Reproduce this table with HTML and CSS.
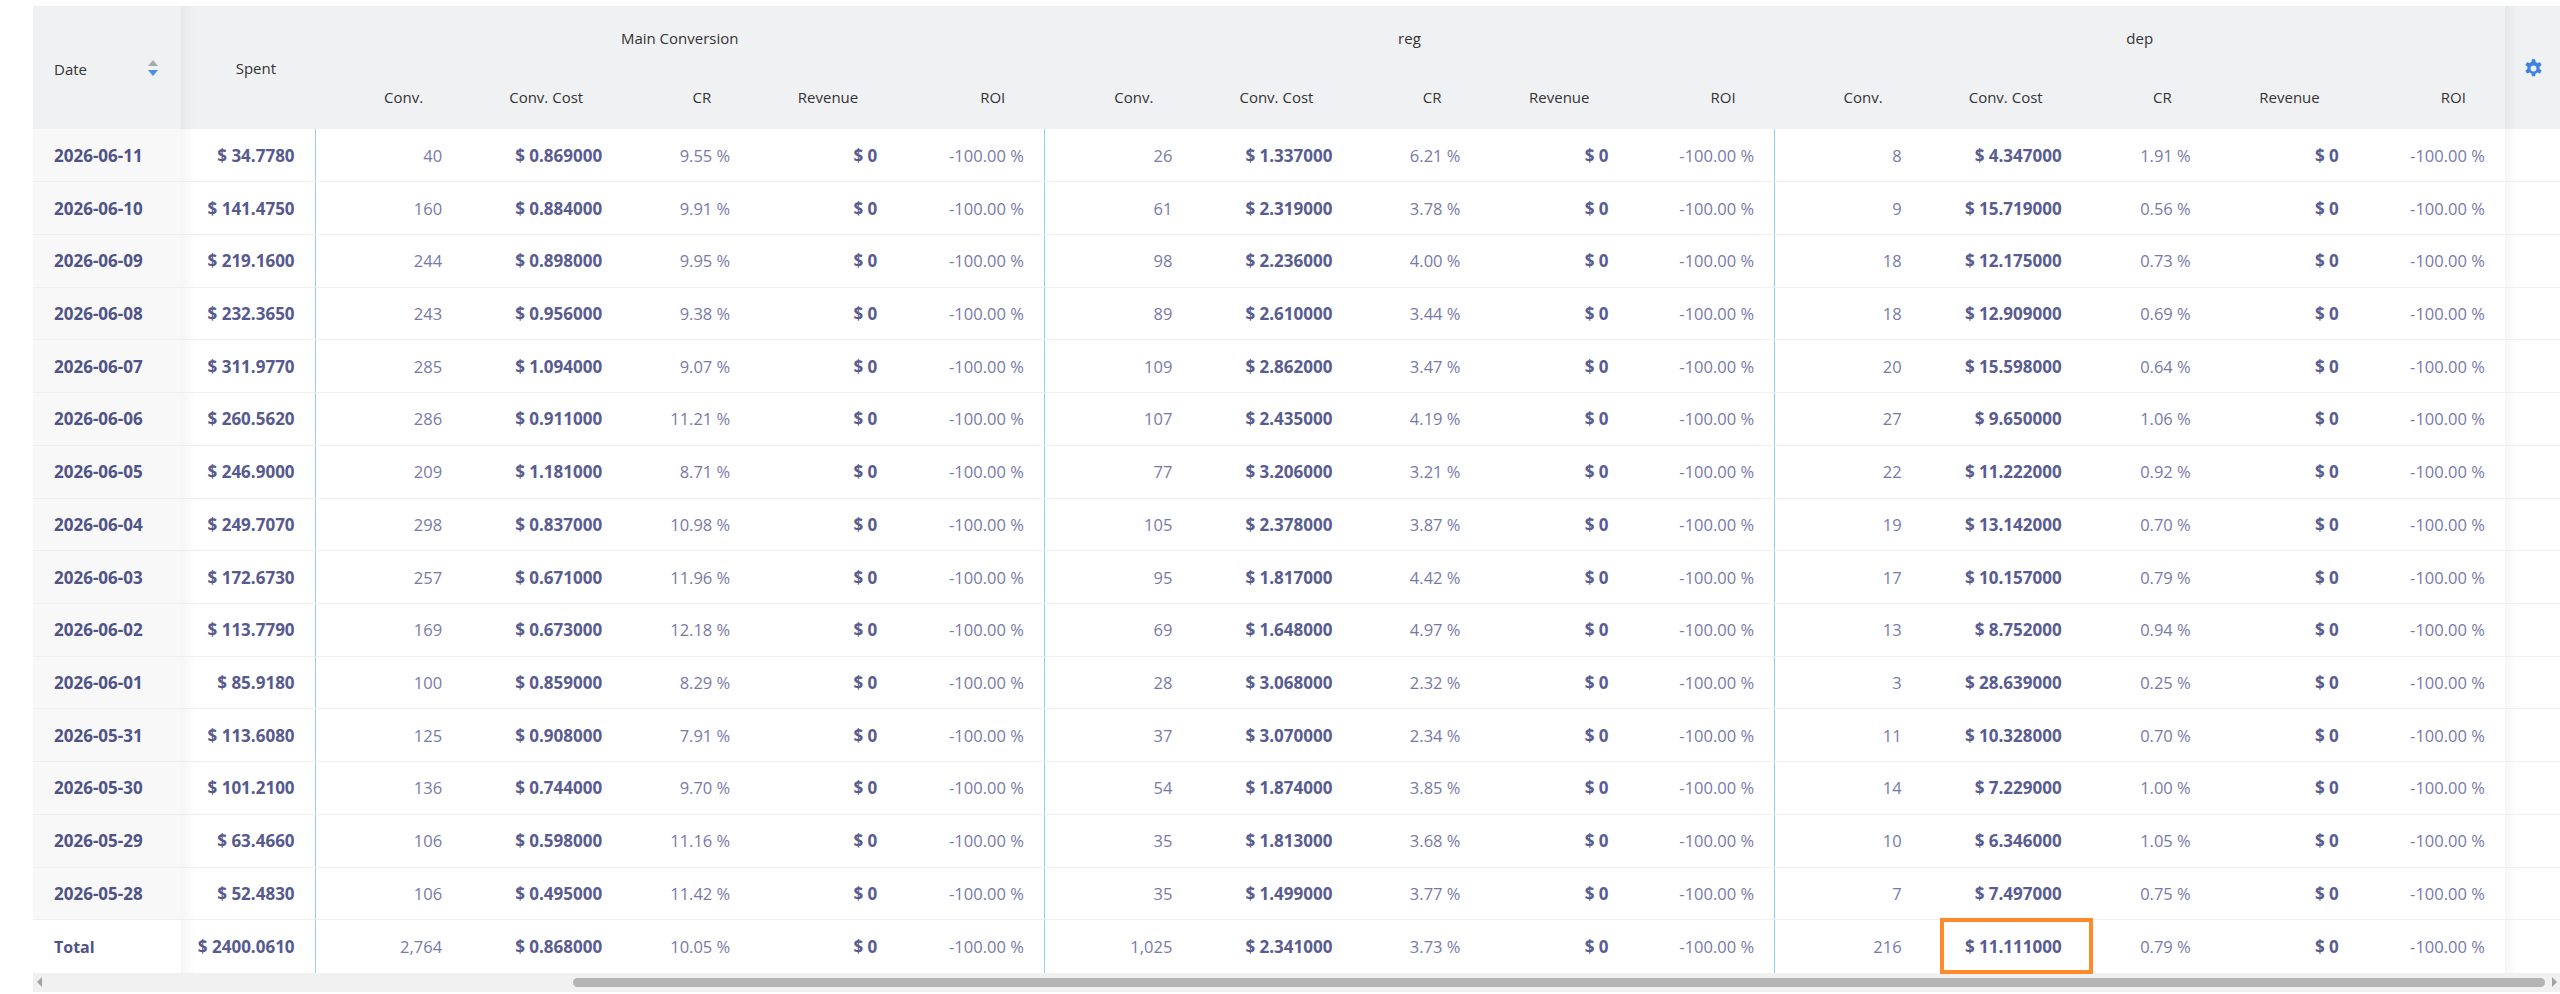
FILE: index.html
```html
<!DOCTYPE html>
<html lang="en">
<head>
<meta charset="utf-8">
<title>Report</title>
<link rel="stylesheet" href="styles.css">
</head>
<body>
<div class="report">
  <table class="grid">
    <colgroup>
      <col class="w-date"><col class="w-spent">
      <col class="w-conv"><col class="w-cost"><col class="w-cr"><col class="w-rev"><col class="w-roi">
      <col class="w-conv2"><col class="w-cost"><col class="w-cr2"><col class="w-rev2"><col class="w-roi2">
      <col class="w-conv3"><col class="w-cost"><col class="w-cr3"><col class="w-rev2"><col class="w-roi2">
      <col class="w-gear">
    </colgroup>
    <thead>
      <tr class="h1">
        <th rowspan="2" class="th-date"><span class="date-label">Date</span><span class="sort"><i class="up"></i><i class="down"></i></span></th>
        <th rowspan="2" class="th-spent">Spent</th>
        <th colspan="5" class="group">Main Conversion</th>
        <th colspan="5" class="group">reg</th>
        <th colspan="5" class="group">dep</th>
        <th rowspan="2" class="th-gear">
          <svg class="gear" viewBox="0 0 24 24" width="21" height="21" aria-hidden="true">
            <path fill="#3d84e6" fill-rule="evenodd" d="M10.2 1.5h3.6l.6 3.1a7.6 7.6 0 0 1 2.1 1.2l3-1 1.8 3.1-2.4 2.1a7.6 7.6 0 0 1 0 2.4l2.4 2.1-1.8 3.1-3-1a7.6 7.6 0 0 1-2.1 1.2l-.6 3.1h-3.6l-.6-3.1a7.6 7.6 0 0 1-2.1-1.200l-3 1-1.8-3.1 2.4-2.1a7.6 7.6 0 0 1 0-2.4L2.7 7.9l1.8-3.1 3 1a7.6 7.6 0 0 1 2.1-1.2zM12 8.6a3.4 3.4 0 1 0 0 6.8 3.4 3.4 0 0 0 0-6.8z"/>
          </svg>
        </th>
      </tr>
      <tr class="h2">
        <th class="sub">Conv.</th><th class="sub">Conv. Cost</th><th class="sub">CR</th><th class="sub">Revenue</th><th class="sub">ROI</th>
        <th class="sub">Conv.</th><th class="sub">Conv. Cost</th><th class="sub">CR</th><th class="sub">Revenue</th><th class="sub">ROI</th>
        <th class="sub">Conv.</th><th class="sub">Conv. Cost</th><th class="sub">CR</th><th class="sub">Revenue</th><th class="sub">ROI</th>
      </tr>
    </thead>
    <tbody>
      <tr><td class="date">2026-06-11</td><td class="spent">$ 34.7780</td><td class="n sep">40</td><td class="m">$ 0.869000</td><td class="n">9.55 %</td><td class="m">$ 0</td><td class="n">-100.00 %</td><td class="n sep">26</td><td class="m">$ 1.337000</td><td class="n">6.21 %</td><td class="m">$ 0</td><td class="n">-100.00 %</td><td class="n sep">8</td><td class="m">$ 4.347000</td><td class="n">1.91 %</td><td class="m">$ 0</td><td class="n">-100.00 %</td><td class="gear-cell"></td></tr>
      <tr><td class="date">2026-06-10</td><td class="spent">$ 141.4750</td><td class="n sep">160</td><td class="m">$ 0.884000</td><td class="n">9.91 %</td><td class="m">$ 0</td><td class="n">-100.00 %</td><td class="n sep">61</td><td class="m">$ 2.319000</td><td class="n">3.78 %</td><td class="m">$ 0</td><td class="n">-100.00 %</td><td class="n sep">9</td><td class="m">$ 15.719000</td><td class="n">0.56 %</td><td class="m">$ 0</td><td class="n">-100.00 %</td><td class="gear-cell"></td></tr>
      <tr><td class="date">2026-06-09</td><td class="spent">$ 219.1600</td><td class="n sep">244</td><td class="m">$ 0.898000</td><td class="n">9.95 %</td><td class="m">$ 0</td><td class="n">-100.00 %</td><td class="n sep">98</td><td class="m">$ 2.236000</td><td class="n">4.00 %</td><td class="m">$ 0</td><td class="n">-100.00 %</td><td class="n sep">18</td><td class="m">$ 12.175000</td><td class="n">0.73 %</td><td class="m">$ 0</td><td class="n">-100.00 %</td><td class="gear-cell"></td></tr>
      <tr><td class="date">2026-06-08</td><td class="spent">$ 232.3650</td><td class="n sep">243</td><td class="m">$ 0.956000</td><td class="n">9.38 %</td><td class="m">$ 0</td><td class="n">-100.00 %</td><td class="n sep">89</td><td class="m">$ 2.610000</td><td class="n">3.44 %</td><td class="m">$ 0</td><td class="n">-100.00 %</td><td class="n sep">18</td><td class="m">$ 12.909000</td><td class="n">0.69 %</td><td class="m">$ 0</td><td class="n">-100.00 %</td><td class="gear-cell"></td></tr>
      <tr><td class="date">2026-06-07</td><td class="spent">$ 311.9770</td><td class="n sep">285</td><td class="m">$ 1.094000</td><td class="n">9.07 %</td><td class="m">$ 0</td><td class="n">-100.00 %</td><td class="n sep">109</td><td class="m">$ 2.862000</td><td class="n">3.47 %</td><td class="m">$ 0</td><td class="n">-100.00 %</td><td class="n sep">20</td><td class="m">$ 15.598000</td><td class="n">0.64 %</td><td class="m">$ 0</td><td class="n">-100.00 %</td><td class="gear-cell"></td></tr>
      <tr><td class="date">2026-06-06</td><td class="spent">$ 260.5620</td><td class="n sep">286</td><td class="m">$ 0.911000</td><td class="n">11.21 %</td><td class="m">$ 0</td><td class="n">-100.00 %</td><td class="n sep">107</td><td class="m">$ 2.435000</td><td class="n">4.19 %</td><td class="m">$ 0</td><td class="n">-100.00 %</td><td class="n sep">27</td><td class="m">$ 9.650000</td><td class="n">1.06 %</td><td class="m">$ 0</td><td class="n">-100.00 %</td><td class="gear-cell"></td></tr>
      <tr><td class="date">2026-06-05</td><td class="spent">$ 246.9000</td><td class="n sep">209</td><td class="m">$ 1.181000</td><td class="n">8.71 %</td><td class="m">$ 0</td><td class="n">-100.00 %</td><td class="n sep">77</td><td class="m">$ 3.206000</td><td class="n">3.21 %</td><td class="m">$ 0</td><td class="n">-100.00 %</td><td class="n sep">22</td><td class="m">$ 11.222000</td><td class="n">0.92 %</td><td class="m">$ 0</td><td class="n">-100.00 %</td><td class="gear-cell"></td></tr>
      <tr><td class="date">2026-06-04</td><td class="spent">$ 249.7070</td><td class="n sep">298</td><td class="m">$ 0.837000</td><td class="n">10.98 %</td><td class="m">$ 0</td><td class="n">-100.00 %</td><td class="n sep">105</td><td class="m">$ 2.378000</td><td class="n">3.87 %</td><td class="m">$ 0</td><td class="n">-100.00 %</td><td class="n sep">19</td><td class="m">$ 13.142000</td><td class="n">0.70 %</td><td class="m">$ 0</td><td class="n">-100.00 %</td><td class="gear-cell"></td></tr>
      <tr><td class="date">2026-06-03</td><td class="spent">$ 172.6730</td><td class="n sep">257</td><td class="m">$ 0.671000</td><td class="n">11.96 %</td><td class="m">$ 0</td><td class="n">-100.00 %</td><td class="n sep">95</td><td class="m">$ 1.817000</td><td class="n">4.42 %</td><td class="m">$ 0</td><td class="n">-100.00 %</td><td class="n sep">17</td><td class="m">$ 10.157000</td><td class="n">0.79 %</td><td class="m">$ 0</td><td class="n">-100.00 %</td><td class="gear-cell"></td></tr>
      <tr><td class="date">2026-06-02</td><td class="spent">$ 113.7790</td><td class="n sep">169</td><td class="m">$ 0.673000</td><td class="n">12.18 %</td><td class="m">$ 0</td><td class="n">-100.00 %</td><td class="n sep">69</td><td class="m">$ 1.648000</td><td class="n">4.97 %</td><td class="m">$ 0</td><td class="n">-100.00 %</td><td class="n sep">13</td><td class="m">$ 8.752000</td><td class="n">0.94 %</td><td class="m">$ 0</td><td class="n">-100.00 %</td><td class="gear-cell"></td></tr>
      <tr><td class="date">2026-06-01</td><td class="spent">$ 85.9180</td><td class="n sep">100</td><td class="m">$ 0.859000</td><td class="n">8.29 %</td><td class="m">$ 0</td><td class="n">-100.00 %</td><td class="n sep">28</td><td class="m">$ 3.068000</td><td class="n">2.32 %</td><td class="m">$ 0</td><td class="n">-100.00 %</td><td class="n sep">3</td><td class="m">$ 28.639000</td><td class="n">0.25 %</td><td class="m">$ 0</td><td class="n">-100.00 %</td><td class="gear-cell"></td></tr>
      <tr><td class="date">2026-05-31</td><td class="spent">$ 113.6080</td><td class="n sep">125</td><td class="m">$ 0.908000</td><td class="n">7.91 %</td><td class="m">$ 0</td><td class="n">-100.00 %</td><td class="n sep">37</td><td class="m">$ 3.070000</td><td class="n">2.34 %</td><td class="m">$ 0</td><td class="n">-100.00 %</td><td class="n sep">11</td><td class="m">$ 10.328000</td><td class="n">0.70 %</td><td class="m">$ 0</td><td class="n">-100.00 %</td><td class="gear-cell"></td></tr>
      <tr><td class="date">2026-05-30</td><td class="spent">$ 101.2100</td><td class="n sep">136</td><td class="m">$ 0.744000</td><td class="n">9.70 %</td><td class="m">$ 0</td><td class="n">-100.00 %</td><td class="n sep">54</td><td class="m">$ 1.874000</td><td class="n">3.85 %</td><td class="m">$ 0</td><td class="n">-100.00 %</td><td class="n sep">14</td><td class="m">$ 7.229000</td><td class="n">1.00 %</td><td class="m">$ 0</td><td class="n">-100.00 %</td><td class="gear-cell"></td></tr>
      <tr><td class="date">2026-05-29</td><td class="spent">$ 63.4660</td><td class="n sep">106</td><td class="m">$ 0.598000</td><td class="n">11.16 %</td><td class="m">$ 0</td><td class="n">-100.00 %</td><td class="n sep">35</td><td class="m">$ 1.813000</td><td class="n">3.68 %</td><td class="m">$ 0</td><td class="n">-100.00 %</td><td class="n sep">10</td><td class="m">$ 6.346000</td><td class="n">1.05 %</td><td class="m">$ 0</td><td class="n">-100.00 %</td><td class="gear-cell"></td></tr>
      <tr><td class="date">2026-05-28</td><td class="spent">$ 52.4830</td><td class="n sep">106</td><td class="m">$ 0.495000</td><td class="n">11.42 %</td><td class="m">$ 0</td><td class="n">-100.00 %</td><td class="n sep">35</td><td class="m">$ 1.499000</td><td class="n">3.77 %</td><td class="m">$ 0</td><td class="n">-100.00 %</td><td class="n sep">7</td><td class="m">$ 7.497000</td><td class="n">0.75 %</td><td class="m">$ 0</td><td class="n">-100.00 %</td><td class="gear-cell"></td></tr>
      <tr class="total"><td class="date">Total</td><td class="spent">$ 2400.0610</td><td class="n sep">2,764</td><td class="m">$ 0.868000</td><td class="n">10.05 %</td><td class="m">$ 0</td><td class="n">-100.00 %</td><td class="n sep">1,025</td><td class="m">$ 2.341000</td><td class="n">3.73 %</td><td class="m">$ 0</td><td class="n">-100.00 %</td><td class="n sep">216</td><td class="m highlight">$ 11.111000</td><td class="n">0.79 %</td><td class="m">$ 0</td><td class="n">-100.00 %</td><td class="gear-cell"></td></tr>
    </tbody>
  </table>
  <div class="hscroll">
    <span class="arrow left"></span>
    <div class="thumb-track"><div class="thumb"></div></div>
    <span class="arrow right"></span>
  </div>
</div>
</body>
</html>
```

FILE: styles.css
```css
* { box-sizing: border-box; }

html, body {
  margin: 0;
  padding: 0;
  background: #ffffff;
}

body {
  font-family: "Open Sans", "Noto Sans", "Liberation Sans", sans-serif;
  color: #333;
  overflow: hidden;
}

.report {
  margin: 6px 0 0 33px;
  width: 2527px;
}

.grid {
  width: 2527px;
  table-layout: fixed;
  border-collapse: collapse;
  border-spacing: 0;
}

.w-date { width: 148px; }
.w-spent { width: 134px; }
.w-conv { width: 147px; }
.w-cost { width: 160px; }
.w-cr { width: 128px; }
.w-rev { width: 147px; }
.w-roi { width: 147px; }
.w-conv2 { width: 148px; }
.w-cr2 { width: 128px; }
.w-rev2 { width: 148px; }
.w-roi2 { width: 146px; }
.w-conv3 { width: 147px; }
.w-cr3 { width: 129px; }
.w-gear { width: 55px; }

thead th {
  background: #f0f1f3;
  font-weight: 400;
  font-size: 15px;
  color: #333;
  padding: 0;
  white-space: nowrap;
}

.h1 { height: 62px; }
.h2 { height: 61px; }

.h1 .group {
  text-align: center;
  vertical-align: middle;
  padding-top: 2px;
}

.th-date {
  text-align: left;
  padding-left: 21px;
  background: #f0f1f3;
}

.date-label {
  vertical-align: middle;
}

.sort {
  display: inline-flex;
  flex-direction: column;
  gap: 4px;
  margin-left: 61px;
  vertical-align: middle;
}

.sort i {
  display: block;
  width: 0;
  height: 0;
  border-left: 5px solid transparent;
  border-right: 5px solid transparent;
}

.sort .up { border-bottom: 6px solid #a9a9a9; }
.sort .down { border-top: 6px solid #4a8fe3; }

.th-spent,
.sub {
  text-align: right;
  padding-right: 39px;
}

.th-spent {
  background: linear-gradient(to right, rgba(0, 0, 0, 0.035), rgba(0, 0, 0, 0) 14px), #f0f1f3;
}

.sub { padding-bottom: 3px; }

.th-gear {
  text-align: center;
  background: linear-gradient(to right, rgba(0, 0, 0, 0.04), rgba(0, 0, 0, 0) 12px), #f0f1f3;
}

.gear {
  display: inline-block;
  vertical-align: middle;
  margin-left: 3px;
}

tbody tr {
  height: 52.73px;
}

tbody td {
  padding: 0 20px 0 0;
  border-bottom: 1px solid #eeeff1;
  font-size: 16.5px;
  text-align: right;
  white-space: nowrap;
  color: #777aa9;
  background: #fff;
}

tbody td.date {
  text-align: left;
  padding-left: 21px;
  font-weight: 700;
  font-size: 17px;
  color: #4f5386;
  background: #f8f8f9;
}

tbody td.spent {
  font-weight: 700;
  font-size: 17px;
  color: #565a8f;
  background: linear-gradient(to right, rgba(0, 0, 0, 0.035), rgba(0, 0, 0, 0) 14px), #fff;
}

tbody td.m {
  font-weight: 700;
  font-size: 17px;
  color: #585c91;
}

tbody td.n {
  font-weight: 400;
}

tbody td.sep {
  border-left: 1px solid #8fd0f6;
}

tbody td.gear-cell {
  background: linear-gradient(to right, rgba(0, 0, 0, 0.035), rgba(0, 0, 0, 0) 12px), #fff;
}

tbody tr.total {
  height: 53px;
}

tbody tr.total td {
  border-bottom: none;
}

tbody tr.total td.date {
  background: #fff;
  font-size: 16px;
}

tbody td.highlight {
  position: relative;
}

tbody td.highlight::after {
  content: "";
  position: absolute;
  left: 18px;
  right: -11px;
  top: -2px;
  bottom: -1px;
  border: 4px solid #ff8a2b;
  pointer-events: none;
}

.hscroll {
  display: flex;
  align-items: center;
  height: 19px;
  background: #f1f1f1;
}

.arrow {
  width: 0;
  height: 0;
  border-top: 5px solid transparent;
  border-bottom: 5px solid transparent;
}

.arrow.left {
  border-right: 5px solid #a3a3a3;
  margin: 0 0 0 4px;
}

.arrow.right {
  border-left: 5px solid #a3a3a3;
  margin: 0 3px 0 0;
}

.thumb-track {
  flex: 1;
  display: flex;
  align-items: center;
  padding: 0 7px 0 531px;
}

.thumb {
  flex: 1;
  height: 9px;
  border-radius: 5px;
  background: #b4b4b4;
}
```
